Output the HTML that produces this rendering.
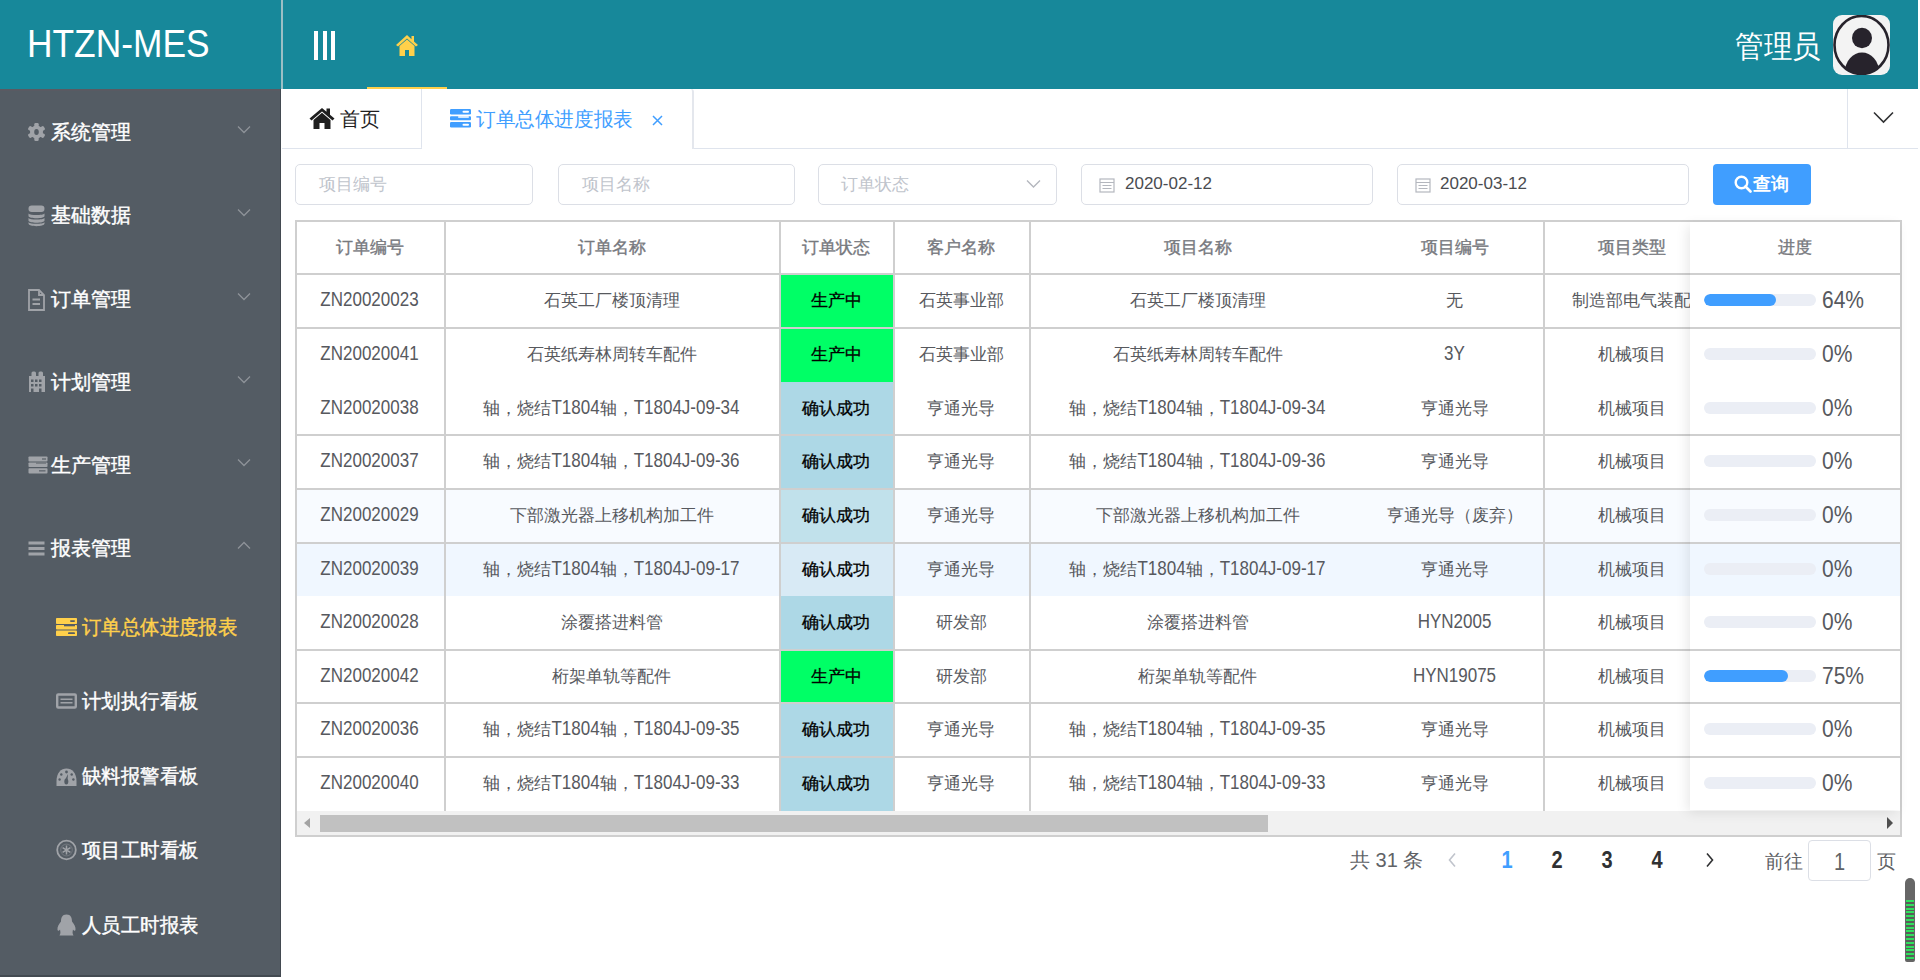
<!DOCTYPE html>
<html><head><meta charset="utf-8">
<style>
*{margin:0;padding:0;box-sizing:border-box}
html,body{width:1920px;height:980px;overflow:hidden;background:#fff;font-family:"Liberation Sans",sans-serif;position:relative}
.a{position:absolute}
#hdr{left:0;top:0;width:1918px;height:89px;background:#17889a}
#hdrline{left:281px;top:0;width:2px;height:89px;background:#9bbfc5}
#logo{left:27px;top:21px;font-size:38px;color:#fff;line-height:46px;white-space:nowrap;transform:scaleX(0.93);transform-origin:0 50%}
#side{left:0;top:89px;width:281px;height:888px;background:#545c64;border-right:1px solid #434a51;border-bottom:2px solid #434a51}
.mi{position:absolute;left:0;width:280px;height:40px;color:#fff;font-size:20px;line-height:40px;white-space:nowrap;-webkit-text-stroke:0.4px currentColor}
.mi .t{position:absolute;left:51px;top:0}
.mi svg.ic{position:absolute;left:27px;top:11px;width:18px;height:18px}
.mi svg.ch{position:absolute;left:237px;top:12.5px;width:14px;height:9px}
.si .t{left:82px;transform:scaleX(0.97);transform-origin:0 50%}
.si svg.ic{left:56px}

.inp{border:1px solid #dcdfe6;border-radius:5px;background:#fff}
.inp span{position:absolute;top:0;line-height:38px;font-size:16.5px;color:#c0c4cc;white-space:nowrap}
.inp span.v{color:#4a4c50;font-size:17px}
.ct{text-align:center;white-space:nowrap;overflow:hidden;font-size:17px;color:#57595e}
.th{color:#77797e;font-size:17px;-webkit-text-stroke:0.35px #77797e}
.st{color:#000;-webkit-text-stroke:0.3px #000}
.hl{left:297px;width:1603px;height:2px;background:#cfcfcf}
.hl2{left:1690px;width:210px;height:2px;background:#cfcfcf}
.vl{top:222px;width:2px;height:589px;background:#cfcfcf}
.pb{width:112px;height:12px;border-radius:6px;background:#ebeef5;overflow:hidden}
.pb div{height:12px;border-radius:6px;background:#409eff}
.lat{display:inline-block;transform:scaleY(1.22);transform-origin:50% 58%}
.lat2{display:inline-block;transform:scaleY(1.12)}
.pt{font-size:21px;color:#57595e;white-space:nowrap}

.pg{font-size:20px;line-height:30px;color:#606266;white-space:nowrap}
.pgn{font-size:20px;line-height:30px;color:#303133;font-weight:bold;width:20px;text-align:center;transform:scaleY(1.2)}
</style></head><body>
<div id="hdr" class="a"></div>
<div id="hdrline" class="a"></div>
<div id="logo" class="a">HTZN-MES</div>
<!-- hamburger -->
<div class="a" style="left:314px;top:31px;width:4px;height:29px;background:#fff"></div>
<div class="a" style="left:323px;top:31px;width:4px;height:29px;background:#fff"></div>
<div class="a" style="left:331px;top:31px;width:4px;height:29px;background:#fff"></div>
<!-- home icon -->
<svg class="a" style="left:395px;top:34px" width="24" height="22" viewBox="0 0 24 22"><path d="M12 1 L1 11 L3 12.5 L12 4.5 L21 12.5 L23 11 L19 7.5 V2 H16.5 V5.2 Z M4.5 12 V22 H10 V16 H14 V22 H19.5 V12 L12 5.5 Z" fill="#ffd04b"/></svg>
<div class="a" style="left:367px;top:87px;width:80px;height:2px;background:#ffd04b"></div>
<!-- user -->
<div class="a" style="left:1735px;top:26px;font-size:31px;line-height:42px;color:#fff;white-space:nowrap;transform:scaleX(0.92);transform-origin:0 50%">管理员</div>
<div class="a" style="left:1833px;top:15px;width:57px;height:60px;background:#f3f3f3;border-radius:9px"></div>
<svg class="a" style="left:1833px;top:15px" width="57" height="60" viewBox="0 0 57 60"><defs><clipPath id="cp"><ellipse cx="28.5" cy="30" rx="27" ry="29.2"/></clipPath></defs><ellipse cx="28.5" cy="30" rx="27" ry="29" fill="none" stroke="#27232c" stroke-width="2.6"/><ellipse cx="29" cy="23" rx="10" ry="10.2" fill="#27232c"/><path d="M11 60 C12 45 20 37.5 29 37.5 C38 37.5 46 45 47 60 Z" fill="#27232c" clip-path="url(#cp)"/></svg>

<div id="side" class="a"></div>
<div class="a" style="left:0;top:89px;width:280px;height:2px;background:#5a5a62"></div>
<!-- sidebar menu -->
<div class="mi" style="top:112px"><span class="t">系统管理</span><svg class="ch" viewBox="0 0 14 9"><path d="M1 1.5 L7 7.5 L13 1.5" fill="none" stroke="#8e9399" stroke-width="1.3"/></svg></div>
<div class="mi" style="top:195px"><span class="t">基础数据</span><svg class="ch" viewBox="0 0 14 9"><path d="M1 1.5 L7 7.5 L13 1.5" fill="none" stroke="#8e9399" stroke-width="1.3"/></svg></div>
<div class="mi" style="top:279px"><span class="t">订单管理</span><svg class="ch" viewBox="0 0 14 9"><path d="M1 1.5 L7 7.5 L13 1.5" fill="none" stroke="#8e9399" stroke-width="1.3"/></svg></div>
<div class="mi" style="top:362px"><span class="t">计划管理</span><svg class="ch" viewBox="0 0 14 9"><path d="M1 1.5 L7 7.5 L13 1.5" fill="none" stroke="#8e9399" stroke-width="1.3"/></svg></div>
<div class="mi" style="top:445px"><span class="t">生产管理</span><svg class="ch" viewBox="0 0 14 9"><path d="M1 1.5 L7 7.5 L13 1.5" fill="none" stroke="#8e9399" stroke-width="1.3"/></svg></div>
<div class="mi" style="top:528px"><span class="t">报表管理</span><svg class="ch" viewBox="0 0 14 9"><path d="M1 7.5 L7 1.5 L13 7.5" fill="none" stroke="#8e9399" stroke-width="1.3"/></svg></div>
<div class="mi si" style="top:607px;color:#ffd04b"><span class="t">订单总体进度报表</span></div>
<div class="mi si" style="top:681px"><span class="t">计划执行看板</span></div>
<div class="mi si" style="top:756px"><span class="t">缺料报警看板</span></div>
<div class="mi si" style="top:830px"><span class="t">项目工时看板</span></div>
<div class="mi si" style="top:905px"><span class="t">人员工时报表</span></div>
<!-- gear 28-45 x 123-141 -->
<svg class="a" style="left:27px;top:122px" width="19" height="20" viewBox="0 0 19 20"><g fill="#a0a3a8"><circle cx="9.5" cy="10" r="6.5"/><rect x="7.3" y="1" width="4.4" height="18" rx="1.2"/><rect x="7.3" y="1" width="4.4" height="18" rx="1.2" transform="rotate(60 9.5 10)"/><rect x="7.3" y="1" width="4.4" height="18" rx="1.2" transform="rotate(-60 9.5 10)"/></g><ellipse cx="9.5" cy="10" rx="2.3" ry="3" fill="#545c64"/></svg>
<!-- database 28.6-44.5 x 205-226 -->
<svg class="a" style="left:28px;top:205px" width="17" height="22" viewBox="0 0 17 22"><g fill="#a0a3a8"><rect x="0.5" y="0.5" width="16" height="6.5" rx="3.2"/><path d="M0.5 8.5 C2 10.5 15 10.5 16.5 8.5 V11 C16.5 14 0.5 14 0.5 11 Z"/><path d="M0.5 13 C2 15 15 15 16.5 13 V15.5 C16.5 18.5 0.5 18.5 0.5 15.5 Z"/><path d="M0.5 17.2 C2 19.2 15 19.2 16.5 17.2 V18.5 C16.5 22 0.5 22 0.5 18.5 Z"/></g></svg>
<!-- document 28.6-44.5 x 289-310 -->
<svg class="a" style="left:28px;top:289px" width="17" height="22" viewBox="0 0 17 22"><g fill="none" stroke="#a0a3a8" stroke-width="1.8"><path d="M1 1 H11 L16 6 V21 H1 Z"/><path d="M11 1 V6 H16"/></g><path d="M4.5 10.5 H12 M4.5 15 H12" stroke="#a0a3a8" stroke-width="2"/></svg>
<!-- building 29-46 x 371-392 -->
<svg class="a" style="left:28px;top:371px" width="18" height="21" viewBox="0 0 18 21"><g fill="#a0a3a8"><rect x="1" y="5" width="16" height="16"/><rect x="3.5" y="0.5" width="4.5" height="6" rx="1.5"/><rect x="10.5" y="0.5" width="4.5" height="6" rx="1.5"/></g><g fill="#545c64"><rect x="3" y="8.5" width="2.5" height="2.5"/><rect x="7" y="8.5" width="2.5" height="2.5"/><rect x="11" y="8.5" width="2.5" height="2.5"/><rect x="3" y="13" width="2.5" height="2.5"/><rect x="7" y="13" width="2.5" height="2.5"/><rect x="11" y="13" width="2.5" height="2.5"/><rect x="3" y="17.5" width="2.5" height="3.5"/><rect x="11" y="17.5" width="2.5" height="3.5"/></g></svg>
<!-- server 28.6-48 x 456-474 -->
<svg class="a" style="left:28px;top:456px" width="20" height="18" viewBox="0 0 20 18"><g fill="#a0a3a8"><rect x="0.5" y="0.5" width="19" height="5" rx="0.8"/><rect x="0.5" y="6.5" width="19" height="4.5" rx="0.8"/><rect x="0.5" y="12.3" width="19" height="5.2" rx="0.8"/></g><g fill="#6a7077"><rect x="14" y="2.2" width="4" height="1.6"/><rect x="8" y="6.5" width="10" height="1.2"/><rect x="11" y="14" width="6.5" height="1.6"/></g></svg>
<!-- menu 28.6-45 x 541-556 -->
<svg class="a" style="left:28px;top:541px" width="17" height="16" viewBox="0 0 17 16"><g fill="#a0a3a8"><rect x="0.5" y="0.5" width="16" height="3"/><rect x="0.5" y="6" width="16" height="3"/><rect x="0.5" y="11.5" width="16" height="3"/></g></svg>
<!-- yellow table 56-77 x 618-636 -->
<svg class="a" style="left:56px;top:618px" width="21" height="18" viewBox="0 0 21 18"><g fill="#ffd04b"><rect x="0" y="0" width="21" height="6" rx="0.8"/><rect x="0" y="7" width="21" height="4.5" rx="0.8"/><rect x="0" y="12.5" width="21" height="5.5" rx="0.8"/></g><g fill="#545c64"><rect x="14" y="2.3" width="5" height="1.6" rx="0.8"/><rect x="8" y="7" width="11" height="1.3"/><rect x="12" y="14.3" width="7" height="1.8" rx="0.9"/></g></svg>
<!-- form 56-77 x 693-709 -->
<svg class="a" style="left:56px;top:693px" width="21" height="16" viewBox="0 0 21 16"><rect x="1.2" y="1.5" width="18.6" height="13" rx="1" fill="none" stroke="#a0a3a8" stroke-width="2.4"/><path d="M4.5 6.2 H16.5 M4.5 9.8 H16.5" stroke="#a0a3a8" stroke-width="1.6"/></svg>
<!-- dashboard 56-76.5 x 768-786 -->
<svg class="a" style="left:56px;top:768px" width="21" height="18" viewBox="0 0 21 18"><path d="M0.5 18 V13 C0.5 5 5 0.5 10.5 0.5 C16 0.5 20.5 5 20.5 13 V18 Z" fill="#a0a3a8"/><g fill="#545c64"><circle cx="10.5" cy="4" r="1.4"/><circle cx="5.3" cy="6.5" r="1.2"/><circle cx="15.7" cy="6.5" r="1.2"/><circle cx="3.6" cy="11.5" r="1.2"/><circle cx="17.4" cy="11.5" r="1.2"/><ellipse cx="10.3" cy="13.5" rx="2" ry="3"/><path d="M9.5 11 L12 6 L11.6 11.5Z"/></g></svg>
<!-- circle 56-76.5 x 839.5-860.5 -->
<svg class="a" style="left:56px;top:839px" width="21" height="22" viewBox="0 0 21 22"><circle cx="10.5" cy="11" r="9.3" fill="none" stroke="#a0a3a8" stroke-width="1.8"/><circle cx="10.5" cy="11" r="5.8" fill="none" stroke="#6d737a" stroke-width="1.2"/><g stroke="#a0a3a8" stroke-width="1.5"><path d="M10.5 6.5 V15.5 M6.6 8.7 L14.4 13.3 M6.6 13.3 L14.4 8.7"/></g></svg>
<!-- penguin 56-76.5 x 914-935.5 -->
<svg class="a" style="left:56px;top:914px" width="21" height="22" viewBox="0 0 21 22"><path d="M10.5 0.5 C6 0.5 5 4 5 7.5 C3 10 1 13 1.5 16 C2 17.5 3.5 16.5 4 15.5 C4.3 17.5 5 19 3.5 21.5 H17.5 C16 19 16.7 17.5 17 15.5 C17.5 16.5 19 17.5 19.5 16 C20 13 18 10 16 7.5 C16 4 15 0.5 10.5 0.5 Z" fill="#a0a3a8"/></svg>
<!-- tabs -->
<div class="a" style="left:282px;top:89px;width:1636px;height:60px;border-bottom:1px solid #dfe4ed"></div>
<div class="a" style="left:282px;top:89px;width:140px;height:60px;border-right:1px solid #dfe4ed;border-bottom:1px solid #dfe4ed;border-radius:0 0 2px 0"></div>
<div class="a" style="left:422px;top:89px;width:272px;height:60px;background:#fff;border-right:2px solid #e4e7ed;border-radius:0 3px 0 0"></div>
<svg class="a" style="left:309px;top:107px" width="26" height="22" viewBox="0 0 26 22"><path d="M13 1 L0.5 11.5 L2.5 13.5 L13 4.5 L23.5 13.5 L25.5 11.5 L21 7.7 V1.5 H17.5 V4.7 Z M4.5 13 V22 H10.5 V16 H15.5 V22 H21.5 V13 L13 5.8 Z" fill="#1f1f1f"/></svg>
<div class="a" style="left:340px;top:104px;font-size:20px;line-height:30px;color:#1f1f1f;white-space:nowrap">首页</div>
<svg class="a" style="left:450px;top:109px" width="21" height="19" viewBox="0 0 21 19"><g fill="#409eff"><rect x="0" y="0" width="21" height="5.5" rx="1.2"/><rect x="0" y="7.3" width="21" height="4" rx="1"/><rect x="0" y="13" width="21" height="5.5" rx="1.2"/></g><g fill="#fff"><rect x="12.5" y="1.8" width="6.5" height="2" rx="1"/><rect x="8" y="7.3" width="11" height="1.4" rx="0.7"/><rect x="12.5" y="14.8" width="6.5" height="2" rx="1"/></g></svg>
<div class="a" style="left:476px;top:104px;font-size:20px;line-height:30px;color:#409eff;white-space:nowrap;transform:scaleX(0.98);transform-origin:0 50%">订单总体进度报表</div>
<svg class="a" style="left:652px;top:115px" width="11" height="11" viewBox="0 0 11 11"><path d="M1 1 L10 10 M10 1 L1 10" stroke="#409eff" stroke-width="1.5"/></svg>
<div class="a" style="left:1847px;top:89px;width:1px;height:60px;background:#dfe4ed"></div>
<svg class="a" style="left:1873px;top:111px" width="21" height="13" viewBox="0 0 21 13"><path d="M1 1.5 L10.5 11 L20 1.5" fill="none" stroke="#303133" stroke-width="1.6"/></svg>

<!-- search -->
<div class="a inp" style="left:295px;top:164px;width:238px;height:41px"><span style="left:23px">项目编号</span></div>
<div class="a inp" style="left:558px;top:164px;width:237px;height:41px"><span style="left:23px">项目名称</span></div>
<div class="a inp" style="left:818px;top:164px;width:239px;height:41px"><span style="left:22px">订单状态</span><svg class="a" style="left:207px;top:14px" width="15" height="10" viewBox="0 0 15 10"><path d="M1 1.5 L7.5 8 L14 1.5" fill="none" stroke="#b4b7be" stroke-width="1.4"/></svg></div>
<div class="a inp" style="left:1081px;top:164px;width:292px;height:41px"><svg class="a cal" style="left:17px;top:12px" width="16" height="16" viewBox="0 0 16 16"><rect x="1" y="2" width="14" height="13" fill="none" stroke="#b4b7be" stroke-width="1.2"/><path d="M1 5.5 H15 M3.5 8.5 H12.5 M3.5 11.5 H12.5" stroke="#b4b7be" stroke-width="1"/></svg><span class="v" style="left:43px">2020-02-12</span></div>
<div class="a inp" style="left:1397px;top:164px;width:292px;height:41px"><svg class="a cal" style="left:17px;top:12px" width="16" height="16" viewBox="0 0 16 16"><rect x="1" y="2" width="14" height="13" fill="none" stroke="#b4b7be" stroke-width="1.2"/><path d="M1 5.5 H15 M3.5 8.5 H12.5 M3.5 11.5 H12.5" stroke="#b4b7be" stroke-width="1"/></svg><span class="v" style="left:42px">2020-03-12</span></div>
<div class="a" style="left:1713px;top:164px;width:98px;height:41px;background:#409eff;border-radius:4px"></div>
<svg class="a" style="left:1734px;top:175px" width="18" height="19" viewBox="0 0 18 19"><circle cx="7.5" cy="7.5" r="5.8" fill="none" stroke="#fff" stroke-width="2.4"/><path d="M11.5 11.5 L16.5 16.5" stroke="#fff" stroke-width="2.6" stroke-linecap="round"/></svg>
<div class="a" style="left:1753px;top:169px;font-size:18px;line-height:30px;color:#fff;font-weight:bold;white-space:nowrap">查询</div>
<!-- table -->
<div class="a" style="left:295px;top:220px;width:1607px;height:617px;border:2px solid #cfcfcf"></div>
<div class="a" style="left:780px;top:274.30px;width:113px;height:53.64px;background:#00ff66"></div>
<div class="a" style="left:780px;top:327.94px;width:113px;height:53.64px;background:#00ff66"></div>
<div class="a" style="left:780px;top:381.58px;width:113px;height:53.64px;background:#add8e6"></div>
<div class="a" style="left:780px;top:435.22px;width:113px;height:53.64px;background:#add8e6"></div>
<div class="a" style="left:297px;top:488.86px;width:1603px;height:53.64px;background:#f8fbff"></div>
<div class="a" style="left:780px;top:488.86px;width:113px;height:53.64px;background:#c1e1eb"></div>
<div class="a" style="left:297px;top:542.50px;width:1603px;height:53.64px;background:#f0f7ff"></div>
<div class="a" style="left:780px;top:542.50px;width:113px;height:53.64px;background:#d8eaf5"></div>
<div class="a" style="left:780px;top:596.14px;width:113px;height:53.64px;background:#add8e6"></div>
<div class="a" style="left:780px;top:649.78px;width:113px;height:53.64px;background:#00ff66"></div>
<div class="a" style="left:780px;top:703.42px;width:113px;height:53.64px;background:#add8e6"></div>
<div class="a" style="left:780px;top:757.06px;width:113px;height:53.64px;background:#add8e6"></div>
<div class="a hl" style="top:273.30px"></div>
<div class="a hl" style="top:326.94px"></div>
<div class="a hl" style="top:434.22px"></div>
<div class="a hl" style="top:487.86px"></div>
<div class="a hl" style="top:541.50px"></div>
<div class="a hl" style="top:648.78px"></div>
<div class="a hl" style="top:702.42px"></div>
<div class="a hl" style="top:756.06px"></div>
<div class="a vl" style="left:444px"></div>
<div class="a vl" style="left:779px"></div>
<div class="a vl" style="left:893px"></div>
<div class="a vl" style="left:1029px"></div>
<div class="a vl" style="left:1543px"></div>
<div class="a ct th" style="left:295px;top:221.00px;width:149px;height:53.00px;line-height:53.00px;">订单编号</div>
<div class="a ct th" style="left:444px;top:221.00px;width:335px;height:53.00px;line-height:53.00px;">订单名称</div>
<div class="a ct th" style="left:779px;top:221.00px;width:114px;height:53.00px;line-height:53.00px;">订单状态</div>
<div class="a ct th" style="left:893px;top:221.00px;width:136px;height:53.00px;line-height:53.00px;">客户名称</div>
<div class="a ct th" style="left:1029px;top:221.00px;width:337px;height:53.00px;line-height:53.00px;">项目名称</div>
<div class="a ct th" style="left:1366px;top:221.00px;width:177px;height:53.00px;line-height:53.00px;">项目编号</div>
<div class="a ct th" style="left:1543px;top:221.00px;width:177px;height:53.00px;line-height:53.00px;">项目类型</div>
<div class="a ct td" style="left:295px;top:274.30px;width:149px;height:53.64px;line-height:53.64px;"><span class="lat">ZN20020023</span></div>
<div class="a ct td" style="left:444px;top:274.30px;width:335px;height:53.64px;line-height:53.64px;">石英工厂楼顶清理</div>
<div class="a ct st" style="left:779px;top:274.30px;width:114px;height:53.64px;line-height:53.64px;">生产中</div>
<div class="a ct td" style="left:893px;top:274.30px;width:136px;height:53.64px;line-height:53.64px;">石英事业部</div>
<div class="a ct td" style="left:1029px;top:274.30px;width:337px;height:53.64px;line-height:53.64px;">石英工厂楼顶清理</div>
<div class="a ct td" style="left:1366px;top:274.30px;width:177px;height:53.64px;line-height:53.64px;">无</div>
<div class="a ct td" style="left:1543px;top:274.30px;width:177px;height:53.64px;line-height:53.64px;">制造部电气装配</div>
<div class="a ct td" style="left:295px;top:327.94px;width:149px;height:53.64px;line-height:53.64px;"><span class="lat">ZN20020041</span></div>
<div class="a ct td" style="left:444px;top:327.94px;width:335px;height:53.64px;line-height:53.64px;">石英纸寿林周转车配件</div>
<div class="a ct st" style="left:779px;top:327.94px;width:114px;height:53.64px;line-height:53.64px;">生产中</div>
<div class="a ct td" style="left:893px;top:327.94px;width:136px;height:53.64px;line-height:53.64px;">石英事业部</div>
<div class="a ct td" style="left:1029px;top:327.94px;width:337px;height:53.64px;line-height:53.64px;">石英纸寿林周转车配件</div>
<div class="a ct td" style="left:1366px;top:327.94px;width:177px;height:53.64px;line-height:53.64px;"><span class="lat">3Y</span></div>
<div class="a ct td" style="left:1543px;top:327.94px;width:177px;height:53.64px;line-height:53.64px;">机械项目</div>
<div class="a ct td" style="left:295px;top:381.58px;width:149px;height:53.64px;line-height:53.64px;"><span class="lat">ZN20020038</span></div>
<div class="a ct td" style="left:444px;top:381.58px;width:335px;height:53.64px;line-height:53.64px;">轴，烧结<span class="lat">T1804</span>轴，<span class="lat">T1804J-09-34</span></div>
<div class="a ct st" style="left:779px;top:381.58px;width:114px;height:53.64px;line-height:53.64px;">确认成功</div>
<div class="a ct td" style="left:893px;top:381.58px;width:136px;height:53.64px;line-height:53.64px;">亨通光导</div>
<div class="a ct td" style="left:1029px;top:381.58px;width:337px;height:53.64px;line-height:53.64px;">轴，烧结<span class="lat">T1804</span>轴，<span class="lat">T1804J-09-34</span></div>
<div class="a ct td" style="left:1366px;top:381.58px;width:177px;height:53.64px;line-height:53.64px;">亨通光导</div>
<div class="a ct td" style="left:1543px;top:381.58px;width:177px;height:53.64px;line-height:53.64px;">机械项目</div>
<div class="a ct td" style="left:295px;top:435.22px;width:149px;height:53.64px;line-height:53.64px;"><span class="lat">ZN20020037</span></div>
<div class="a ct td" style="left:444px;top:435.22px;width:335px;height:53.64px;line-height:53.64px;">轴，烧结<span class="lat">T1804</span>轴，<span class="lat">T1804J-09-36</span></div>
<div class="a ct st" style="left:779px;top:435.22px;width:114px;height:53.64px;line-height:53.64px;">确认成功</div>
<div class="a ct td" style="left:893px;top:435.22px;width:136px;height:53.64px;line-height:53.64px;">亨通光导</div>
<div class="a ct td" style="left:1029px;top:435.22px;width:337px;height:53.64px;line-height:53.64px;">轴，烧结<span class="lat">T1804</span>轴，<span class="lat">T1804J-09-36</span></div>
<div class="a ct td" style="left:1366px;top:435.22px;width:177px;height:53.64px;line-height:53.64px;">亨通光导</div>
<div class="a ct td" style="left:1543px;top:435.22px;width:177px;height:53.64px;line-height:53.64px;">机械项目</div>
<div class="a ct td" style="left:295px;top:488.86px;width:149px;height:53.64px;line-height:53.64px;"><span class="lat">ZN20020029</span></div>
<div class="a ct td" style="left:444px;top:488.86px;width:335px;height:53.64px;line-height:53.64px;">下部激光器上移机构加工件</div>
<div class="a ct st" style="left:779px;top:488.86px;width:114px;height:53.64px;line-height:53.64px;">确认成功</div>
<div class="a ct td" style="left:893px;top:488.86px;width:136px;height:53.64px;line-height:53.64px;">亨通光导</div>
<div class="a ct td" style="left:1029px;top:488.86px;width:337px;height:53.64px;line-height:53.64px;">下部激光器上移机构加工件</div>
<div class="a ct td" style="left:1366px;top:488.86px;width:177px;height:53.64px;line-height:53.64px;">亨通光导（废弃）</div>
<div class="a ct td" style="left:1543px;top:488.86px;width:177px;height:53.64px;line-height:53.64px;">机械项目</div>
<div class="a ct td" style="left:295px;top:542.50px;width:149px;height:53.64px;line-height:53.64px;"><span class="lat">ZN20020039</span></div>
<div class="a ct td" style="left:444px;top:542.50px;width:335px;height:53.64px;line-height:53.64px;">轴，烧结<span class="lat">T1804</span>轴，<span class="lat">T1804J-09-17</span></div>
<div class="a ct st" style="left:779px;top:542.50px;width:114px;height:53.64px;line-height:53.64px;">确认成功</div>
<div class="a ct td" style="left:893px;top:542.50px;width:136px;height:53.64px;line-height:53.64px;">亨通光导</div>
<div class="a ct td" style="left:1029px;top:542.50px;width:337px;height:53.64px;line-height:53.64px;">轴，烧结<span class="lat">T1804</span>轴，<span class="lat">T1804J-09-17</span></div>
<div class="a ct td" style="left:1366px;top:542.50px;width:177px;height:53.64px;line-height:53.64px;">亨通光导</div>
<div class="a ct td" style="left:1543px;top:542.50px;width:177px;height:53.64px;line-height:53.64px;">机械项目</div>
<div class="a ct td" style="left:295px;top:596.14px;width:149px;height:53.64px;line-height:53.64px;"><span class="lat">ZN20020028</span></div>
<div class="a ct td" style="left:444px;top:596.14px;width:335px;height:53.64px;line-height:53.64px;">涂覆搭进料管</div>
<div class="a ct st" style="left:779px;top:596.14px;width:114px;height:53.64px;line-height:53.64px;">确认成功</div>
<div class="a ct td" style="left:893px;top:596.14px;width:136px;height:53.64px;line-height:53.64px;">研发部</div>
<div class="a ct td" style="left:1029px;top:596.14px;width:337px;height:53.64px;line-height:53.64px;">涂覆搭进料管</div>
<div class="a ct td" style="left:1366px;top:596.14px;width:177px;height:53.64px;line-height:53.64px;"><span class="lat">HYN2005</span></div>
<div class="a ct td" style="left:1543px;top:596.14px;width:177px;height:53.64px;line-height:53.64px;">机械项目</div>
<div class="a ct td" style="left:295px;top:649.78px;width:149px;height:53.64px;line-height:53.64px;"><span class="lat">ZN20020042</span></div>
<div class="a ct td" style="left:444px;top:649.78px;width:335px;height:53.64px;line-height:53.64px;">桁架单轨等配件</div>
<div class="a ct st" style="left:779px;top:649.78px;width:114px;height:53.64px;line-height:53.64px;">生产中</div>
<div class="a ct td" style="left:893px;top:649.78px;width:136px;height:53.64px;line-height:53.64px;">研发部</div>
<div class="a ct td" style="left:1029px;top:649.78px;width:337px;height:53.64px;line-height:53.64px;">桁架单轨等配件</div>
<div class="a ct td" style="left:1366px;top:649.78px;width:177px;height:53.64px;line-height:53.64px;"><span class="lat">HYN19075</span></div>
<div class="a ct td" style="left:1543px;top:649.78px;width:177px;height:53.64px;line-height:53.64px;">机械项目</div>
<div class="a ct td" style="left:295px;top:703.42px;width:149px;height:53.64px;line-height:53.64px;"><span class="lat">ZN20020036</span></div>
<div class="a ct td" style="left:444px;top:703.42px;width:335px;height:53.64px;line-height:53.64px;">轴，烧结<span class="lat">T1804</span>轴，<span class="lat">T1804J-09-35</span></div>
<div class="a ct st" style="left:779px;top:703.42px;width:114px;height:53.64px;line-height:53.64px;">确认成功</div>
<div class="a ct td" style="left:893px;top:703.42px;width:136px;height:53.64px;line-height:53.64px;">亨通光导</div>
<div class="a ct td" style="left:1029px;top:703.42px;width:337px;height:53.64px;line-height:53.64px;">轴，烧结<span class="lat">T1804</span>轴，<span class="lat">T1804J-09-35</span></div>
<div class="a ct td" style="left:1366px;top:703.42px;width:177px;height:53.64px;line-height:53.64px;">亨通光导</div>
<div class="a ct td" style="left:1543px;top:703.42px;width:177px;height:53.64px;line-height:53.64px;">机械项目</div>
<div class="a ct td" style="left:295px;top:757.06px;width:149px;height:53.64px;line-height:53.64px;"><span class="lat">ZN20020040</span></div>
<div class="a ct td" style="left:444px;top:757.06px;width:335px;height:53.64px;line-height:53.64px;">轴，烧结<span class="lat">T1804</span>轴，<span class="lat">T1804J-09-33</span></div>
<div class="a ct st" style="left:779px;top:757.06px;width:114px;height:53.64px;line-height:53.64px;">确认成功</div>
<div class="a ct td" style="left:893px;top:757.06px;width:136px;height:53.64px;line-height:53.64px;">亨通光导</div>
<div class="a ct td" style="left:1029px;top:757.06px;width:337px;height:53.64px;line-height:53.64px;">轴，烧结<span class="lat">T1804</span>轴，<span class="lat">T1804J-09-33</span></div>
<div class="a ct td" style="left:1366px;top:757.06px;width:177px;height:53.64px;line-height:53.64px;">亨通光导</div>
<div class="a ct td" style="left:1543px;top:757.06px;width:177px;height:53.64px;line-height:53.64px;">机械项目</div>
<div class="a" style="left:297px;top:811px;width:1603px;height:24px;background:#f1f1f1"></div>
<div class="a" style="left:320px;top:815px;width:948px;height:17px;background:#c1c1c1"></div>
<svg class="a" style="left:303px;top:818px" width="8" height="10" viewBox="0 0 8 10"><path d="M7 0 L1 5 L7 10Z" fill="#a3a3a3"/></svg>
<svg class="a" style="left:1886px;top:817px" width="8" height="12" viewBox="0 0 8 12"><path d="M1 0 L7 6 L1 12Z" fill="#505050"/></svg>
<div class="a" style="left:1690px;top:222px;width:210px;height:588px;background:#fff;box-shadow:-3px 3px 12px -1px rgba(0,0,0,0.10)"></div>
<div class="a" style="left:1690px;top:488.86px;width:210px;height:53.64px;background:#f8fbff"></div>
<div class="a" style="left:1690px;top:542.50px;width:210px;height:53.64px;background:#f0f7ff"></div>
<div class="a hl2" style="top:273.30px"></div>
<div class="a hl2" style="top:326.94px"></div>
<div class="a hl2" style="top:434.22px"></div>
<div class="a hl2" style="top:487.86px"></div>
<div class="a hl2" style="top:541.50px"></div>
<div class="a hl2" style="top:648.78px"></div>
<div class="a hl2" style="top:702.42px"></div>
<div class="a hl2" style="top:756.06px"></div>
<div class="a ct th" style="left:1690px;top:221.00px;width:210px;height:53.00px;line-height:53.00px;">进度</div>
<div class="a pb" style="left:1704px;top:294.30px"><div style="width:64%"></div></div>
<div class="a pt" style="left:1822px;top:274.30px;height:53.64px;line-height:52.64px"><span class="lat2">64%</span></div>
<div class="a pb" style="left:1704px;top:347.94px"><div style="width:0%"></div></div>
<div class="a pt" style="left:1822px;top:327.94px;height:53.64px;line-height:52.64px"><span class="lat2">0%</span></div>
<div class="a pb" style="left:1704px;top:401.58px"><div style="width:0%"></div></div>
<div class="a pt" style="left:1822px;top:381.58px;height:53.64px;line-height:52.64px"><span class="lat2">0%</span></div>
<div class="a pb" style="left:1704px;top:455.22px"><div style="width:0%"></div></div>
<div class="a pt" style="left:1822px;top:435.22px;height:53.64px;line-height:52.64px"><span class="lat2">0%</span></div>
<div class="a pb" style="left:1704px;top:508.86px"><div style="width:0%"></div></div>
<div class="a pt" style="left:1822px;top:488.86px;height:53.64px;line-height:52.64px"><span class="lat2">0%</span></div>
<div class="a pb" style="left:1704px;top:562.50px"><div style="width:0%"></div></div>
<div class="a pt" style="left:1822px;top:542.50px;height:53.64px;line-height:52.64px"><span class="lat2">0%</span></div>
<div class="a pb" style="left:1704px;top:616.14px"><div style="width:0%"></div></div>
<div class="a pt" style="left:1822px;top:596.14px;height:53.64px;line-height:52.64px"><span class="lat2">0%</span></div>
<div class="a pb" style="left:1704px;top:669.78px"><div style="width:75%"></div></div>
<div class="a pt" style="left:1822px;top:649.78px;height:53.64px;line-height:52.64px"><span class="lat2">75%</span></div>
<div class="a pb" style="left:1704px;top:723.42px"><div style="width:0%"></div></div>
<div class="a pt" style="left:1822px;top:703.42px;height:53.64px;line-height:52.64px"><span class="lat2">0%</span></div>
<div class="a pb" style="left:1704px;top:777.06px"><div style="width:0%"></div></div>
<div class="a pt" style="left:1822px;top:757.06px;height:53.64px;line-height:52.64px"><span class="lat2">0%</span></div>
<!-- pagination -->
<div class="a pg" style="left:1350px;top:845px">共 31 条</div>
<svg class="a" style="left:1447px;top:852px" width="10" height="16" viewBox="0 0 10 16"><path d="M8 1.5 L2.5 8 L8 14.5" fill="none" stroke="#c0c4cc" stroke-width="1.6"/></svg>
<div class="a pgn" style="left:1497px;top:845px;color:#409eff">1</div>
<div class="a pgn" style="left:1547px;top:845px">2</div>
<div class="a pgn" style="left:1597px;top:845px">3</div>
<div class="a pgn" style="left:1647px;top:845px">4</div>
<svg class="a" style="left:1705px;top:852px" width="10" height="16" viewBox="0 0 10 16"><path d="M2 1.5 L7.5 8 L2 14.5" fill="none" stroke="#303133" stroke-width="1.6"/></svg>
<div class="a pg" style="left:1765px;top:847px;font-size:19px">前往</div>
<div class="a" style="left:1808px;top:840px;width:63px;height:41px;border:1px solid #dcdfe6;border-radius:4px"></div>
<div class="a pg" style="left:1808px;top:847px;width:63px;text-align:center;transform:scaleY(1.2)">1</div>
<div class="a pg" style="left:1877px;top:847px;font-size:19px">页</div>
<!-- widget -->
<div class="a" style="left:1905px;top:878px;width:10px;height:84px;border-radius:5px 5px 2px 2px;background:#666"></div>
<div class="a" style="left:1906px;top:900px;width:8px;height:60px;background:repeating-linear-gradient(#2ee05c 0 2px,#5a5a5a 2px 3.8px)"></div>
</body></html>
